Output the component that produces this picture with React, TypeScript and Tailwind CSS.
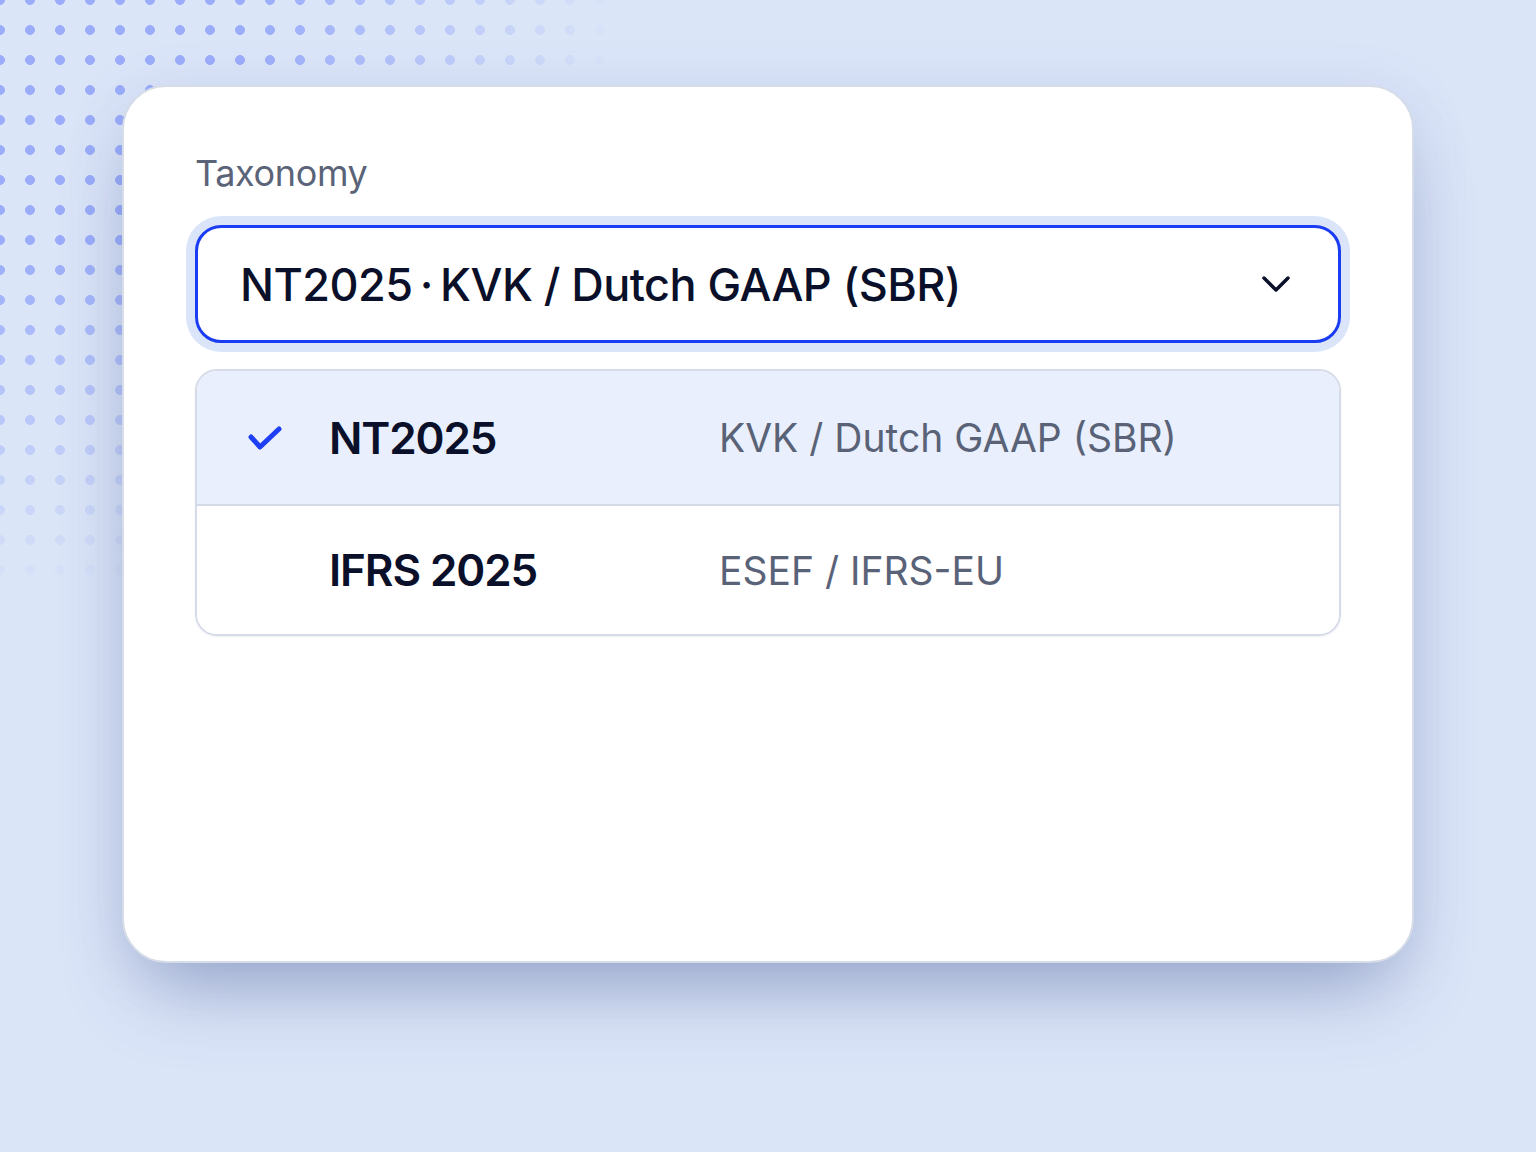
import React from 'react';

interface TaxonomyOption {
  id: string;
  name: string;
  framework: string;
}

const options: TaxonomyOption[] = [
  { id: 'nt2025', name: 'NT2025', framework: 'KVK / Dutch GAAP (SBR)' },
  { id: 'ifrs2025', name: 'IFRS 2025', framework: 'ESEF / IFRS-EU' },
];

function CheckIcon() {
  return (
    <svg width="36" height="26" viewBox="0 0 36 26" fill="none" className="shrink-0">
      <polyline
        points="4,12 13,22 32,4"
        stroke="#1f3ff4"
        strokeWidth="5"
        strokeLinecap="round"
        strokeLinejoin="round"
      />
    </svg>
  );
}

function ChevronDown() {
  return (
    <svg width="30" height="20" viewBox="0 0 30 20" fill="none" className="shrink-0">
      <polyline
        points="3,4 15,16 27,4"
        stroke="#0b1128"
        strokeWidth="3.5"
        strokeLinecap="round"
        strokeLinejoin="round"
      />
    </svg>
  );
}

export default function App() {
  const selected = 'nt2025';

  return (
    <div className="relative min-h-[1152px] w-full overflow-hidden bg-[#dbe5f8] font-['Inter','Noto_Sans',sans-serif]">
      {/* dotted backdrop, fades out from the top-left corner */}
      <div className="pointer-events-none absolute inset-0 bg-[radial-gradient(circle,#9badfa_4.6px,transparent_5.2px)] bg-[size:30px_30px] bg-[position:-15px_-15px] [mask-image:radial-gradient(ellipse_620px_600px_at_0_0,black_42%,transparent_100%)]" />

      <div className="relative pt-[85px]">
        <div className="mx-auto h-[878px] w-[1292px] rounded-[44px] border-2 border-[#d6dce8] bg-white px-[71px] pt-[64px] shadow-[0_44px_80px_-24px_rgba(60,80,140,0.42),0_10px_60px_rgba(90,110,170,0.12)]">
          <div className="text-[36px] leading-[44px] tracking-[-0.01em] text-[#5a6378]">Taxonomy</div>

          {/* trigger */}
          <div className="mt-[30px] flex h-[118px] items-center justify-between rounded-[26px] border-[3px] border-[#1a3cf3] bg-white pl-[42px] pr-[47px] shadow-[0_0_0_9px_#dbe5f9]">
            <span className="text-[45px] font-medium leading-none tracking-[-0.012em] text-[#0a1029]">
              NT2025&#8201;·&#8201;KVK / Dutch GAAP (SBR)
            </span>
            <ChevronDown />
          </div>

          {/* options */}
          <div className="mt-[26px] overflow-hidden rounded-[22px] border-2 border-[#d5dbe7] bg-white shadow-[0_1px_2px_rgba(60,80,130,0.08)]">
            {options.map((opt, i) => {
              const active = opt.id === selected;
              return (
                <div
                  key={opt.id}
                  className={`flex items-center pl-[50px] ${
                    active ? 'bg-[#e9effc]' : 'bg-white'
                  } ${i < options.length - 1 ? 'h-[135px] border-b-2 border-[#d3dae7]' : 'h-[128px]'}`}
                >
                  <div className="w-[36px]">{active && <CheckIcon />}</div>
                  <div className="ml-[46px] w-[390px] text-[44px] font-semibold leading-none tracking-[-0.025em] text-[#0a1029]">
                    {opt.name}
                  </div>
                  <div className="text-[39px] leading-none text-[#596277]">{opt.framework}</div>
                </div>
              );
            })}
          </div>
        </div>
      </div>
    </div>
  );
}
